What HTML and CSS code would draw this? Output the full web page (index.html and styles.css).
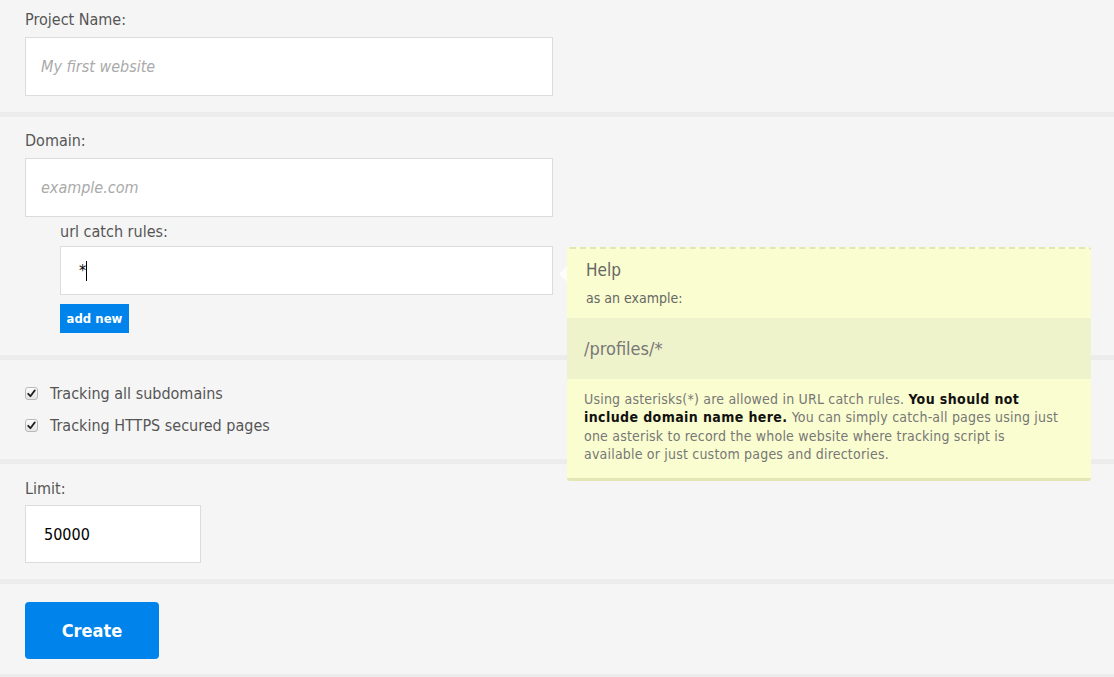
FILE: index.html
```html
<!DOCTYPE html>
<html>
<head>
<meta charset="utf-8">
<link rel="stylesheet" href="styles.css">
</head>
<body>
<form class="form">
  <section class="section first">
    <label class="label">Project Name:</label>
    <div class="input"><span class="placeholder">My first website</span></div>
  </section>

  <section class="section">
    <label class="label">Domain:</label>
    <div class="input"><span class="placeholder">example.com</span></div>
    <div class="rules">
      <label class="label sub">url catch rules:</label>
      <div class="rule-wrap">
        <div class="input rule"><span class="value">*</span><span class="caret"></span></div>
        <div class="help">
          <span class="arrow"></span>
          <div class="help-head">
            <div class="help-title">Help</div>
            <div class="help-sub">as an example:</div>
          </div>
          <div class="help-example">/profiles/*</div>
          <p class="help-text">Using asterisks(*) are allowed in URL catch rules. <b>You should not<br>include domain name here.</b> You can simply catch-all pages using just<br>one asterisk to record the whole website where tracking script is<br>available or just custom pages and directories.</p>
        </div>
      </div>
      <button type="button" class="add-btn">add new</button>
    </div>
  </section>

  <section class="section checks">
    <div class="check-row"><span class="box"><svg width="9" height="9" viewBox="0 0 9 9"><path d="M1.2 4.8 L3.4 7.2 L7.8 1.4" fill="none" stroke="#222" stroke-width="1.8" stroke-linecap="round" stroke-linejoin="round"/></svg></span><span class="check-label">Tracking all subdomains</span></div>
    <div class="check-row"><span class="box"><svg width="9" height="9" viewBox="0 0 9 9"><path d="M1.2 4.8 L3.4 7.2 L7.8 1.4" fill="none" stroke="#222" stroke-width="1.8" stroke-linecap="round" stroke-linejoin="round"/></svg></span><span class="check-label">Tracking HTTPS secured pages</span></div>
  </section>

  <section class="section limit">
    <label class="label">Limit:</label>
    <div class="input small"><span class="value num">50000</span></div>
  </section>

  <section class="section submit">
    <button type="button" class="create-btn">Create</button>
  </section>
</form>
</body>
</html>
```

FILE: styles.css
```css
* { box-sizing: border-box; }

html, body {
  margin: 0;
  padding: 0;
}

body {
  background: #ececec;
  font-family: "DejaVu Sans Condensed", "DejaVu Sans", sans-serif;
  color: #555;
  width: 1114px;
  height: 677px;
  overflow: hidden;
}

.form {
  display: flex;
  flex-direction: column;
  gap: 5px;
}

.section {
  background: #f5f5f5;
  padding: 14px 25px 16px;
  display: flex;
  flex-direction: column;
  align-items: flex-start;
}

.section.first {
  padding-top: 10px;
}

.label {
  display: block;
  font-size: 16px;
  line-height: 20px;
  color: #555;
  margin-bottom: 7px;
}

.input {
  width: 528px;
  height: 59px;
  background: #fff;
  border: 1px solid #dcdcdc;
  display: flex;
  align-items: center;
  padding-left: 15px;
}

.placeholder {
  font-style: italic;
  color: #aaa;
  font-size: 16px;
}

.rules {
  margin-left: 35px;
  padding-top: 5px;
  padding-bottom: 6px;
  display: flex;
  flex-direction: column;
  align-items: flex-start;
}

.label.sub {
  margin-bottom: 4px;
}

.rule-wrap {
  position: relative;
}

.input.rule {
  width: 493px;
  height: 49px;
  padding-left: 18px;
}

.value {
  color: #000;
  font-size: 16px;
}

.caret {
  display: inline-block;
  width: 1px;
  height: 20px;
  background: #000;
}

.add-btn {
  margin-top: 9px;
  width: 69px;
  height: 29px;
  padding: 0;
  border: none;
  background: #0084ec;
  color: #fff;
  font-family: inherit;
  font-size: 13px;
  font-weight: bold;
}

.help {
  position: absolute;
  left: 507px;
  top: 1px;
  width: 524px;
  background: #fafdcf;
  border-top: 2px dashed #e2e5b6;
  border-bottom: 3px solid #e3e6b4;
  border-radius: 3px;
  z-index: 2;
}

.arrow {
  position: absolute;
  left: -8px;
  top: 17px;
  width: 0;
  height: 0;
  border-top: 8px solid transparent;
  border-bottom: 8px solid transparent;
  border-right: 8px solid #fdfdfa;
}

.help-head {
  padding: 10px 19px 11px;
}

.help-title {
  font-size: 17px;
  line-height: 22px;
  color: #666;
}

.help-sub {
  font-size: 14px;
  line-height: 18px;
  margin-top: 8px;
  color: #666;
}

.help-example {
  background: #eff3cc;
  height: 61px;
  display: flex;
  align-items: center;
  padding-left: 17px;
  font-size: 18px;
  color: #777;
}

.help-text {
  margin: 0;
  padding: 11px 10px 15px 17px;
  font-size: 14px;
  line-height: 18.3px;
  letter-spacing: 0.2px;
  color: #777;
}

.help-text b {
  color: #111;
  letter-spacing: 0.4px;
}

.checks {
  padding-top: 23px;
  padding-bottom: 24px;
  gap: 12px;
}

.check-row {
  display: flex;
  align-items: center;
  height: 20px;
}

.box {
  width: 13px;
  height: 13px;
  border: 1px solid #b9b9b9;
  border-radius: 3px;
  background: linear-gradient(#fdfdfd, #e4e4e4);
  display: flex;
  align-items: center;
  justify-content: center;
  margin-right: 12px;
}

.check-label {
  font-size: 16px;
  color: #555;
}

.limit {
  padding-top: 15px;
  padding-bottom: 16px;
}

.limit .label {
  margin-bottom: 6px;
}

.input.small {
  width: 176px;
  height: 58px;
  padding-left: 18px;
}

.submit {
  padding-top: 18px;
  padding-bottom: 15px;
}

.create-btn {
  width: 134px;
  height: 57px;
  border: none;
  border-radius: 4px;
  background: #0084ec;
  color: #fff;
  font-family: inherit;
  font-size: 18px;
  font-weight: bold;
}
```
